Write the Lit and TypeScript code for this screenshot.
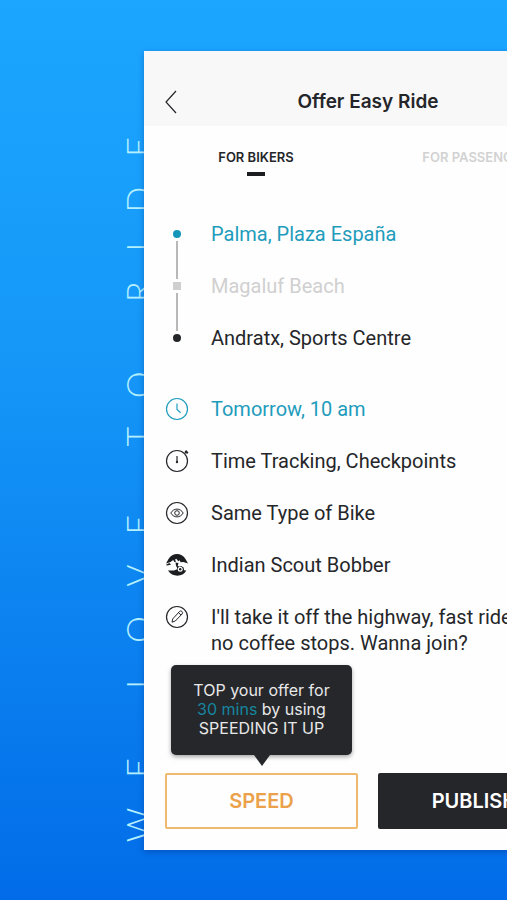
import { LitElement, html, css, svg } from "lit";
import { customElement } from "lit/decorators.js";
import { classMap } from "lit/directives/class-map.js";

const clock = svg`<circle cx="12" cy="12" r="10.5"/><path d="M12 6.5v6l3.6 3.2"/>`;
const stopwatch = svg`<circle cx="12" cy="12" r="10.5"/><path d="M12 7v5"/><circle cx="12" cy="13" r="1.200" fill="currentColor" stroke="none"/><path d="M20.4 1.8l2.4 2.4M20 4l1.4-1.2" stroke-width="2"/>`;
const eye = svg`<circle cx="12" cy="12" r="10.5"/><path d="M5.8 12c3-5.2 9.400-5.200 12.400 0c-3 5.200-9.400 5.200-12.400 0z" stroke-width="1"/><circle cx="12" cy="12" r="2.300" stroke-width="1"/>`;
const bike = svg`<g fill="#1c1d20" stroke="none"><path d="M3.500 6C7.500-.800 16.500-.800 20.500 6L23 10.500l-4.500-1.600-3 .4-.6-2-1.600 1-2-2.600-1.200.8.800 2.400-1.500.2-1.200-2.200-2.700 2L1 10.500z"/><path d="M.800 12l3.400-2 2 1.600-3.800.8z"/><path d="M10.500 9.500l3 .5-.8 2.400 1.500 1.600-1.700 1.400-1.500-2.600z"/><path d="M3 17.600l6-.2 2.600-.9 1.500-2.500 3-.9 2.500 1.500.5 2.700 2.200.3C18 24.500 7 24.500 3 17.600z"/></g><circle cx="15.200" cy="16.300" r="2.500" fill="#fff" stroke="none"/><circle cx="15.200" cy="16.300" r="1.200" fill="#1c1d20" stroke="none"/>`;
const pencil = svg`<circle cx="12" cy="12" r="10.5"/><path d="M7 17.200l.8-3.400 6.600-7.200a1.800 1.800 0 0 1 2.700 2.400l-6.800 7zM13.400 7.600l2.600 2.400" stroke-width="1"/>`;

const details = [
  { icon: clock, text: "Tomorrow, 10 am", accent: true },
  { icon: stopwatch, text: "Time Tracking, Checkpoints", accent: false },
  { icon: eye, text: "Same Type of Bike", accent: false },
  { icon: bike, text: "Indian Scout Bobber", accent: false },
];

@customElement("app-root")
export class AppRoot extends LitElement {
  static styles = css`
    :host {
      display: block;
      color: #25262a;
      font-family: Inter, "Liberation Sans", sans-serif;
    }
    * { box-sizing: border-box; }
    .page {
      position: relative;
      min-height: 100vh;
      padding: 51px 0 50px 144px;
      overflow: hidden;
      background: linear-gradient(#1ca6ff, #1597f8 40%, #026ce8);
    }
    .slogan {
      position: absolute;
      left: 118px;
      bottom: 58px;
      margin: 0;
      writing-mode: vertical-rl;
      transform: rotate(180deg);
      white-space: nowrap;
      color: #b5f0ff;
      font: 300 34px/40px Lato, sans-serif;
      letter-spacing: 30px;
    }
    .card {
      position: relative;
      margin-right: -85px;
      background: #fefefe;
      box-shadow: 0 2px 6px rgba(0, 40, 120, 0.35);
    }
    button {
      margin: 0;
      padding: 0;
      border: 0;
      background: none;
      color: inherit;
      font: inherit;
      cursor: pointer;
    }
    .bar {
      display: grid;
      grid-template-columns: 40px 1fr 40px;
      align-items: center;
      padding: 36px 14px 9px;
      background: #f8f8f8;
    }
    .back { display: flex; padding: 0 6px; }
    .title {
      margin: 0;
      text-align: center;
      font-size: 19px;
      font-weight: 600;
      line-height: 30px;
    }
    svg {
      display: block;
      fill: none;
      stroke: currentColor;
      stroke-width: 1.2;
    }
    .tabs { display: grid; grid-template-columns: 1fr 1fr; }
    .tab {
      display: flex;
      flex-direction: column;
      align-items: center;
      gap: 6px;
      padding-top: 22px;
      font-size: 13px;
      font-weight: 600;
      line-height: 18px;
      color: #d2d2d2;
    }
    .tab.active { color: #25262a; }
    .tab::after { content: ""; width: 18px; height: 4px; }
    .tab.active::after { background: #1c1d20; }
    .body { padding: 45px 21px 21px; }
    .route, .row {
      display: grid;
      grid-template-columns: 24px 1fr;
      column-gap: 22px;
      font-family: Roboto, "Liberation Sans", sans-serif;
      font-size: 20px;
      line-height: 26px;
    }
    .rail {
      display: flex;
      flex-direction: column;
      align-items: center;
      gap: 3px;
      padding: 9px 0;
    }
    .dot { width: 8px; height: 8px; border-radius: 50%; background: #25262a; }
    .dot.start { background: #1596b8; }
    .dot.via { border-radius: 0; background: #cfcfcf; }
    .line { flex: 1; width: 2px; background: #b8b8b8; }
    .stops, .details {
      display: flex;
      flex-direction: column;
      gap: 26px;
      margin: 0;
      padding: 0;
      list-style: none;
    }
    .details { margin-top: 45px; }
    .accent { color: #1f9cbc; }
    .muted { color: #d0d0d0; }
    .row svg { margin-top: 1px; }
    .actions {
      display: grid;
      grid-template-columns: 1fr 1fr;
      gap: 20px;
      margin-top: 117px;
    }
    .boost { position: relative; display: grid; }
    .action {
      height: 56px;
      border-radius: 2px;
      font-size: 20px;
      font-weight: 600;
      line-height: 24px;
    }
    .speed { border: 2px solid #f0b970; color: #eba14a; }
    .publish { background: #25262a; color: #fff; }
    .tip {
      position: absolute;
      right: 6px;
      bottom: calc(100% + 18px);
      left: 6px;
      margin: 0;
      padding: 16px 12px 17px;
      border-radius: 5px;
      background: #25272b;
      box-shadow: 0 2px 4px rgba(0, 0, 0, 0.35);
      color: #e8e8e8;
      text-align: center;
      font-size: 16px;
      line-height: 19px;
    }
    .tip .accent { color: #16869f; }
    .tip::after {
      content: "";
      position: absolute;
      top: 100%;
      left: calc(50% - 8px);
      border: 8px solid transparent;
      border-top: 11px solid #25272b;
      border-bottom: 0;
    }
  `;

  private icon(shape: unknown) {
    return html`<svg width="24" height="24" viewBox="0 0 24 24" aria-hidden="true">${shape}</svg>`;
  }

  render() {
    return html`
      <div class="page">
        <p class="slogan">WE LOVE TO RIDE</p>
        <main class="card">
          <header class="bar">
            <button class="back" aria-label="Back">
              <svg width="14" height="24" viewBox="0 0 14 24" aria-hidden="true"><path d="M12 1L2 12l10 11" /></svg>
            </button>
            <h1 class="title">Offer Easy Ride</h1>
          </header>
          <nav class="tabs">
            <button class="tab active">FOR BIKERS</button>
            <button class="tab">FOR PASSENGERS</button>
          </nav>
          <div class="body">
            <section class="route">
              <div class="rail">
                <span class="dot start"></span><span class="line"></span>
                <span class="dot via"></span><span class="line"></span>
                <span class="dot"></span>
              </div>
              <ul class="stops">
                <li class="accent">Palma, Plaza España</li>
                <li class="muted">Magaluf Beach</li>
                <li>Andratx, Sports Centre</li>
              </ul>
            </section>
            <ul class="details">
              ${details.map(
                (d) => html`<li class=${classMap({ row: true, accent: d.accent })}>${this.icon(d.icon)}<span>${d.text}</span></li>`
              )}
              <li class="row">${this.icon(pencil)}<span>I'll take it off the highway, fast ride,<br />no coffee stops. Wanna join?</span></li>
            </ul>
            <div class="actions">
              <div class="boost">
                <p class="tip" id="tip">TOP your offer for<br /><span class="accent">30 mins</span> by using<br />SPEEDING IT UP</p>
                <button class="action speed" aria-describedby="tip">SPEED</button>
              </div>
              <button class="action publish">PUBLISH</button>
            </div>
          </div>
        </main>
      </div>
    `;
  }
}
